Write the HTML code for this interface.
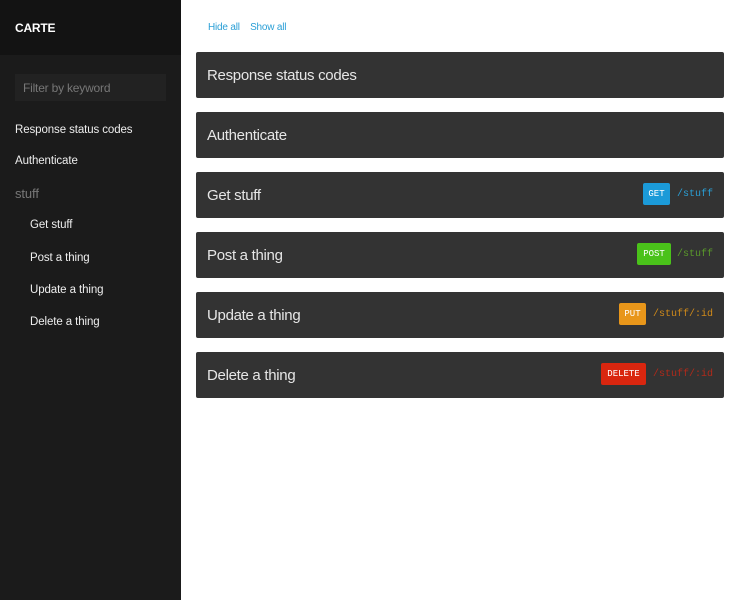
<!DOCTYPE html>
<html><head><style>
*{margin:0;padding:0;box-sizing:border-box}
body{width:750px;height:600px;background:#fff;font-family:"Liberation Sans",sans-serif;position:relative;overflow:hidden}
.side{position:absolute;left:0;top:0;width:181px;height:600px;background:#1b1b1b}
.hd{height:55px;background:#131313;color:#fff;font-size:12px;font-weight:bold;padding:21px 0 0 15px;letter-spacing:-0.2px}
.filter{position:absolute;left:15px;top:74px;width:151px;height:27px;background:#222;color:#777;font-size:12px;padding:7px 0 0 8px;letter-spacing:-0.2px}
.nav{position:absolute;left:15px;color:#eee;font-size:11.5px;letter-spacing:-0.1px}
.links{position:absolute;left:208px;top:22px;font-size:10px;color:#2a9fd6;letter-spacing:-0.2px}
.p{position:absolute;left:196px;width:528px;height:46px;background:#333;border-radius:2px;color:#e6e6e6;font-size:15px;padding:15px 0 0 11px;letter-spacing:-0.3px}
.b{position:absolute;top:11px;height:22px;font-family:"Liberation Mono",monospace;font-size:9px;color:#fff;padding:6px 0 0;text-align:center;border-radius:2px;letter-spacing:0}
.path{position:absolute;top:17px;font-family:"Liberation Mono",monospace;font-size:10px;letter-spacing:0}
</style></head><body>
<div class="side">
<div class="hd">CARTE</div>
<div class="filter">Filter by keyword</div>
<div class="nav" style="top:124px">Response status codes</div>
<div class="nav" style="top:155px">Authenticate</div>
<div class="nav" style="top:186px;color:#777;font-size:13px">stuff</div>
<div class="nav" style="top:219px;left:30px">Get stuff</div>
<div class="nav" style="top:252px;left:30px">Post a thing</div>
<div class="nav" style="top:284px;left:30px">Update a thing</div>
<div class="nav" style="top:316px;left:30px">Delete a thing</div>
</div>
<div class="links">Hide all &nbsp;&nbsp; Show all</div>
<div class="p" style="top:52px">Response status codes</div>
<div class="p" style="top:112px">Authenticate</div>
<div class="p" style="top:172px">Get stuff<div class="b" style="left:447px;width:27px;background:#1b9ad8">GET</div><div class="path" style="left:481px;color:#2a9fd6">/stuff</div></div>
<div class="p" style="top:232px">Post a thing<div class="b" style="left:441px;width:34px;background:#4ac21a">POST</div><div class="path" style="left:481px;color:#5a9a2a">/stuff</div></div>
<div class="p" style="top:292px">Update a thing<div class="b" style="left:423px;width:27px;background:#e8961a">PUT</div><div class="path" style="left:457px;color:#d08a1a">/stuff/:id</div></div>
<div class="p" style="top:352px">Delete a thing<div class="b" style="left:405px;width:45px;background:#d9260f">DELETE</div><div class="path" style="left:457px;color:#b02a1a">/stuff/:id</div></div>
</body></html>
